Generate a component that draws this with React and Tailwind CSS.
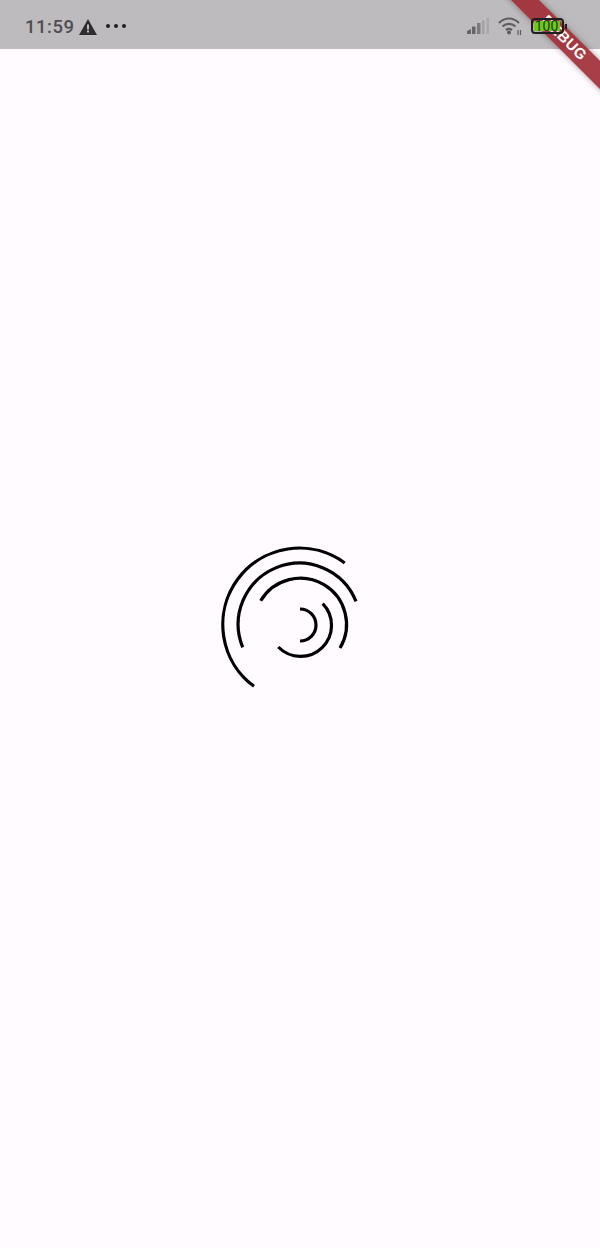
// App.jsx - loading screen with status bar and debug banner
const arcs = [
  'M300 608 A16 16 0 0 1 300 640',
  'M322.7 602.7 A31 31 0 1 1 278.3 646',
  'M260.7 599.7 A46 46 0 1 1 340 647',
  'M242.7 646.3 A61 61 0 1 1 356 600.3',
  'M254 685.3 A76 76 0 1 1 344.7 562',
];

function StatusBar() {
  return (
    <div className="h-[49px] shrink-0 bg-[#bdbbbd] flex items-center justify-between pl-[25px] pr-[33px] pt-[5px]">
      <div className="flex items-center">
        <span className="text-[18.5px] font-medium text-[#4f4d50] font-['Roboto',sans-serif] tracking-[0.5px] mt-[1px]">11:59</span>
        <svg className="ml-[5px] -mt-[1px]" width="18" height="16" viewBox="0 0 18 16">
          <path d="M9 0 L18 16 L0 16 Z" fill="#2f2d30" />
          <rect x="8" y="5.5" width="2" height="5" fill="#bdbbbd" />
          <rect x="8" y="11.5" width="2" height="2" fill="#bdbbbd" />
        </svg>
        <div className="flex items-center gap-[4px] ml-[9px] -mt-[3px]">
          <span className="w-[4px] h-[4px] rounded-full bg-[#1f1d20]" />
          <span className="w-[4px] h-[4px] rounded-full bg-[#1f1d20]" />
          <span className="w-[4px] h-[4px] rounded-full bg-[#1f1d20]" />
        </div>
      </div>
      <div className="relative z-20 flex items-center gap-[9px] -mt-[2px]">
        <svg width="22" height="16" viewBox="0 0 22 16">
          <path d="M0 16 V13 L4 11 V16 Z" fill="#676568" />
          <rect x="5" y="8.5" width="3.5" height="7.5" fill="#676568" />
          <rect x="10" y="5" width="3.5" height="11" fill="#7c7a7d" />
          <rect x="15" y="2.5" width="2.5" height="13.5" fill="#a3a1a4" />
          <rect x="19.5" y="0" width="2.5" height="16" fill="#a9a7aa" />
        </svg>
        <svg width="24" height="18" viewBox="0 0 24 18" fill="none" stroke="#5f5d60" strokeWidth="2.2">
          <path d="M1 6 C7 0 15 0 21 6" />
          <path d="M4.5 9.5 C8 6 14 6 17.5 9.5" />
          <path d="M8 13 C10 11.5 12 11.5 14 13" />
          <circle cx="11" cy="15.5" r="2" fill="#5f5d60" stroke="none" />
          <path d="M20 13 V18 M22.5 13 V18" strokeWidth="1.2" />
        </svg>
        <div className="flex items-center gap-[1.5px]">
          <div className="w-[33px] h-[16px] rounded-[4px] border-2 border-[#1f1d20] p-[1px]">
            <div className="w-[26px] h-full bg-[#6fc91c] flex items-center justify-center">
              <span className="text-[14px] leading-none text-[#1d3a0a] font-['Roboto',sans-serif]">100</span>
            </div>
          </div>
          <span className="w-[2px] h-[5px] bg-[#1f1d20]" />
        </div>
      </div>
    </div>
  );
}

export default function App() {
  return (
    <div className="relative w-[600px] h-[1248px] overflow-hidden bg-[#fffbff] flex flex-col">
      <StatusBar />
      <div className="flex-1" />

      {/* spinner arcs, drawn in page coordinates */}
      <svg className="absolute left-0 top-[0.5px]" width="600" height="1248" fill="none" stroke="#000" strokeWidth="3.2" strokeLinecap="butt">
        {arcs.map((d, i) => (
          <path key={i} d={d} />
        ))}
      </svg>

      {/* debug ribbon */}
      <div className="absolute z-10 left-[475px] top-[30px] w-[180px] h-[20px] rotate-45 bg-[#a02a32]/90 shadow-[0_0_6px_rgba(0,0,0,0.35)] flex items-center justify-center pb-[3px]">
        <span className="text-[15px] leading-none font-black text-white font-['Liberation_Sans',sans-serif] tracking-[0.5px] mr-[4px]">DEBUG</span>
      </div>
    </div>
  );
}
